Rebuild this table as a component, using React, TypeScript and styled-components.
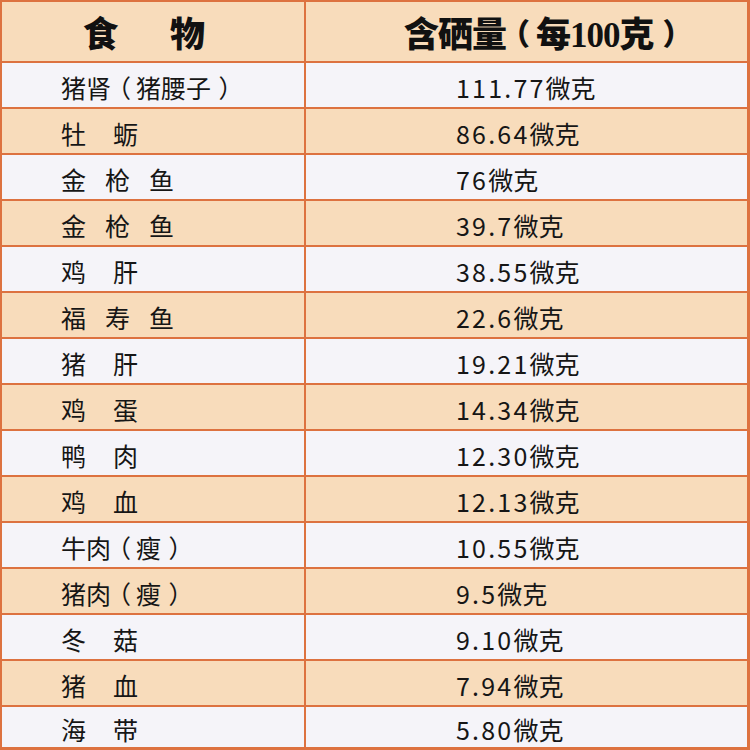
import React from 'react'
import styled, { createGlobalStyle } from 'styled-components'

const GlobalStyle = createGlobalStyle`
  html, body {
    margin: 0;
    padding: 0;
    background: #f5f4f9;
  }
  #root {
    width: 750px;
    height: 750px;
    overflow: hidden;
  }
`

const LINE = '#dd7240'
const PEACH = '#f8dcbb'
const LIGHT = '#f5f4f9'

const Table = styled.div`
  display: grid;
  grid-template-columns: 302px 441px;
  grid-template-rows: 59px repeat(14, 44px) 40px;
  gap: 2px;
  padding: 2px 3px 3px 2px;
  width: 750px;
  height: 750px;
  box-sizing: border-box;
  background: ${LINE};
`

const HeadCell = styled.div`
  display: flex;
  align-items: center;
  background: ${PEACH};
  color: #111;
  font-family: 'Liberation Serif', 'Noto Sans CJK SC', serif;
  font-weight: 900;
  font-size: 35px;
`

const FoodHead = styled(HeadCell)`
  padding-left: 81px;
  gap: 52px;
`

const AmountHead = styled(HeadCell)`
  padding-left: 98px;
  letter-spacing: -1px;
`

const Cell = styled.div<{ $tone: 'light' | 'peach'; $pad: number }>`
  display: flex;
  align-items: center;
  padding: 3px 0 0 ${({ $pad }) => $pad}px;
  background: ${({ $tone }) => ($tone === 'peach' ? PEACH : LIGHT)};
  color: #161616;
  font-family: 'Noto Sans CJK SC', 'Noto Sans', sans-serif;
  font-size: 25px;
  white-space: pre;
`

const Digits = styled.span`
  letter-spacing: 2.2px;
`

// full-width brackets sit near the middle of their em box in the print:
// take the half-width form and pad it back out to a full em
const Bracket = styled.span<{ $size?: number }>`
  display: inline-block;
  font-family: 'Noto Sans CJK SC', sans-serif;
  ${({ $size }) => ($size ? `font-size: ${$size}px;` : '')}
  font-feature-settings: 'halt' 1;
  letter-spacing: 0;
  padding: 0 0.2em 0 0.3em;
`

const Spread = styled.span<{ $gap: number }>`
  display: flex;
  gap: ${({ $gap }) => $gap}px;
`

const rows = [
  { name: '猪肾（猪腰子）', value: '111.77微克' },
  { name: '牡 蛎', value: '86.64微克' },
  { name: '金 枪 鱼', value: '76微克' },
  { name: '金 枪 鱼', value: '39.7微克' },
  { name: '鸡 肝', value: '38.55微克' },
  { name: '福 寿 鱼', value: '22.6微克' },
  { name: '猪 肝', value: '19.21微克' },
  { name: '鸡 蛋', value: '14.34微克' },
  { name: '鸭 肉', value: '12.30微克' },
  { name: '鸡 血', value: '12.13微克' },
  { name: '牛肉（瘦）', value: '10.55微克' },
  { name: '猪肉（瘦）', value: '9.5微克' },
  { name: '冬 菇', value: '9.10微克' },
  { name: '猪 血', value: '7.94微克' },
  { name: '海 带', value: '5.80微克' },
]

function FoodName({ name }: { name: string }) {
  if (!name.includes(' ')) {
    const bits = name.split(/([（）])/).filter(Boolean)
    return (
      <>
        {bits.map((b, i) =>
          b === '（' || b === '）' ? <Bracket key={i}>{b}</Bracket> : <span key={i}>{b}</span>
        )}
      </>
    )
  }
  const parts = name.split(' ')
  return (
    <Spread $gap={parts.length === 2 ? 27 : 19}>
      {parts.map((p, i) => (
        <span key={i}>{p}</span>
      ))}
    </Spread>
  )
}

function Amount({ value }: { value: string }) {
  const num = value.replace('微克', '')
  return (
    <>
      <Digits>{num}</Digits>微克
    </>
  )
}

export default function App() {
  return (
    <>
      <GlobalStyle />
      <Table>
        <FoodHead>
          <span>食</span>
          <span>物</span>
        </FoodHead>
        <AmountHead>
          含硒量
          <Bracket $size={30}>（</Bracket>
          每100克
          <Bracket $size={30}>）</Bracket>
        </AmountHead>
        {rows.map((r, i) => {
          const tone = i % 2 === 1 ? 'peach' : 'light'
          return (
            <React.Fragment key={i}>
              <Cell $tone={tone} $pad={59}>
                <FoodName name={r.name} />
              </Cell>
              <Cell $tone={tone} $pad={150}>
                <Amount value={r.value} />
              </Cell>
            </React.Fragment>
          )
        })}
      </Table>
    </>
  )
}
